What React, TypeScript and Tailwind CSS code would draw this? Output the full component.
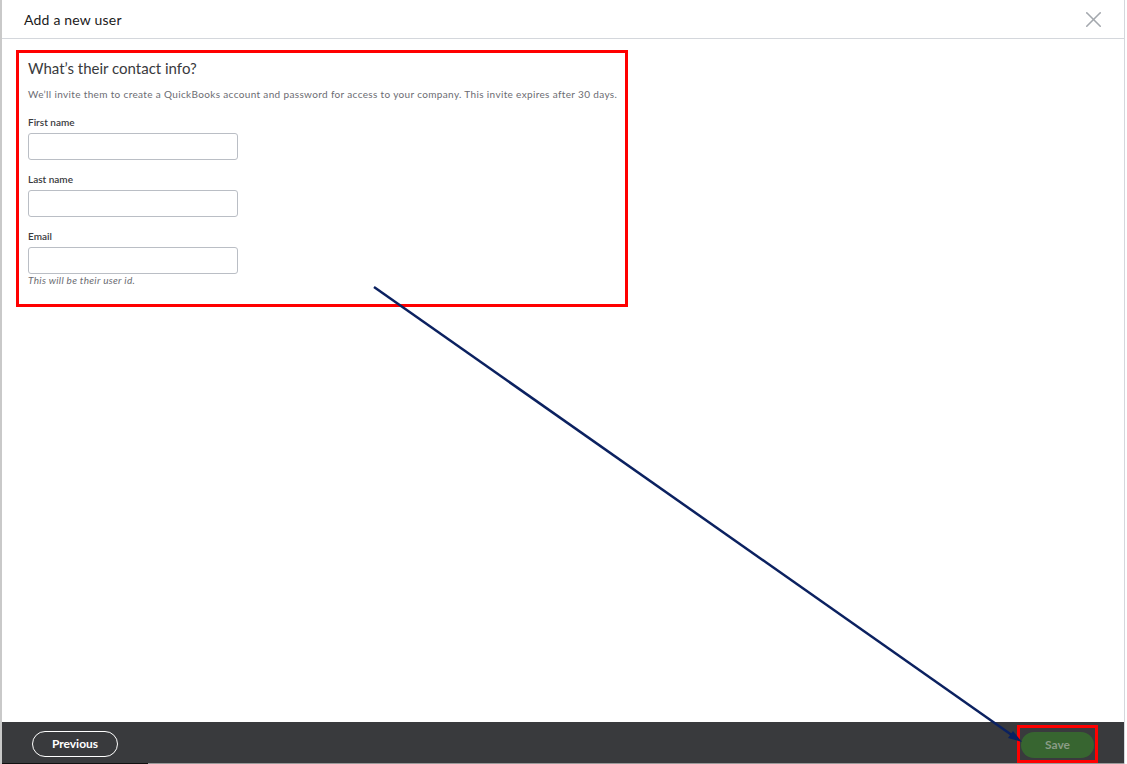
import { X } from "lucide-react";

const Field = ({ label, hint }: { label: string; hint?: string }) => (
  <div className="flex flex-col">
    <label className="text-[10px] font-semibold leading-[14px] text-[#393a3d]">{label}</label>
    <input
      className="mt-[4px] h-[27px] w-[210px] rounded-[3px] border border-[#babec5] bg-white outline-none"
      type="text"
    />
    {hint && (
      <p className="text-[10px] italic leading-[13px] tracking-[0.3px] text-[#6b6c72]">{hint}</p>
    )}
  </div>
);

export default function App() {
  return (
    <div
      className="relative h-[764px] w-[1127px] overflow-hidden bg-white"
      style={{ fontFamily: "Lato, 'Open Sans', sans-serif" }}
    >
      <div className="flex h-full">
        <div className="w-[2px] bg-[#c9c9c9]" />
        <div className="flex h-full flex-1 flex-col border-r border-[#d4d7dc]">
          {/* header */}
          <div className="flex h-[39px] items-center justify-between border-b border-[#d4d7dc] pl-[22px] pr-[17px]">
            <h1 className="text-[14px] tracking-[0.2px] text-[#1a1a1a]">Add a new user</h1>
            <X size={27} strokeWidth={1.4} className="text-[#a4a8ae]" />
          </div>

          {/* body */}
          <div className="flex-1">
            <div className="ml-[14px] mt-[11px] h-[257px] w-[612px] border-[3px] border-[#ff0000] px-[9px] pt-[5px]">
              <h2 className="text-[15px] leading-[20px] text-[#393a3d]">What’s their contact info?</h2>
              <p className="mt-[9px] whitespace-nowrap text-[10px] leading-[14px] tracking-[0.35px] text-[#6b6c72]">
                We’ll invite them to create a QuickBooks account and password for access to your company. This invite expires after 30 days.
              </p>
              <div className="mt-[14px] flex flex-col gap-[12px]">
                <Field label="First name" />
                <Field label="Last name" />
                <Field label="Email" hint="This will be their user id." />
              </div>
            </div>
          </div>

          {/* footer */}
          <div className="flex h-[41px] items-start justify-between bg-[#393a3d] pl-[30px] pr-[26px]">
            <button className="mt-[9px] h-[26px] w-[86px] rounded-full border border-white text-[12px] font-bold text-white">
              Previous
            </button>
            <div className="mt-[3px] border-[3px] border-[#ff0000] px-[1px] pb-[2px] pt-[3px]">
              <button className="h-[26px] w-[73px] rounded-full bg-[#376530] text-[12px] font-bold text-[#8a9c86]">
                Save
              </button>
            </div>
          </div>
          <div className="flex h-[1px]">
            <div className="w-[146px] bg-[#111]" />
            <div className="flex-1 bg-[#9a9a9a]" />
          </div>
        </div>
        <div className="w-[2px] bg-white" />
      </div>

      {/* annotation arrow */}
      <svg className="pointer-events-none absolute left-0 top-0" width="1127" height="764">
        <line x1="374" y1="287" x2="1016" y2="738" stroke="#0b2160" strokeWidth="2.5" />
        <polygon points="1022,742 1008,738 1013,731" fill="#0b2160" />
      </svg>
    </div>
  );
}
